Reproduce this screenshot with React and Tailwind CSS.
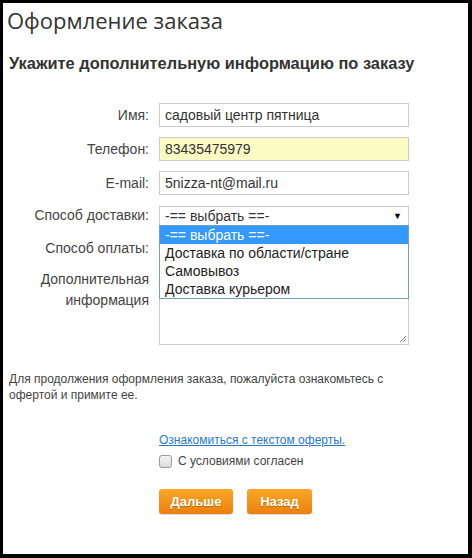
import React from "react";

function Row({ label, children, className = "" }) {
  return (
    <div className={"flex items-center " + className}>
      <div className="w-[146px] pr-[0px] text-right text-[14px] text-[#444]">{label}</div>
      <div className="ml-[10px] w-[250px]">{children}</div>
    </div>
  );
}

export default function App() {
  const font = { fontFamily: '"Liberation Sans", Arial, sans-serif' };
  return (
    <div
      className="w-[472px] h-[558px] bg-white border-t-[3px] border-l-[3px] border-r-4 border-b-4 border-black overflow-hidden"
      style={font}
    >
      <div className="flex flex-col">
        <h1
          className="pl-[4px] pt-[3px] text-[22px] leading-[28px] text-[#333]"
          style={{ fontFamily: '"Open Sans", sans-serif' }}
        >
          Оформление заказа
        </h1>
        <h2 className="mt-[19px] pl-[6px] text-[16.4px] leading-[20px] font-bold text-[#333]">
          Укажите дополнительную информацию по заказу
        </h2>

        <div className="mt-[30px] flex flex-col">
          <Row label="Имя:">
            <div className="h-[24px] border border-[#ccc] bg-white px-[5px] text-[14px] leading-[22px] text-[#333]">
              садовый центр пятница
            </div>
          </Row>
          <Row label="Телефон:" className="mt-[10px]">
            <div className="h-[24px] border border-[#ccc] bg-[#fbfbc4] px-[5px] text-[14px] leading-[22px] text-[#333]">
              83435475979
            </div>
          </Row>
          <Row label="E-mail:" className="mt-[10px]">
            <div className="h-[24px] border border-[#ccc] bg-white px-[5px] text-[14px] leading-[22px] text-[#333]">
              5nizza-nt@mail.ru
            </div>
          </Row>
          <Row label="Способ доставки:" className="mt-[10px] relative z-10">
            <div className="relative">
              <div className="flex h-[20px] items-center justify-between border border-[#ccc] bg-white pl-[5px] pr-[6px] text-[14px] leading-[18px] text-[#333]">
                <span>-== выбрать ==-</span>
                <span className="text-[9px] text-black">▼</span>
              </div>
              <div className="absolute left-0 top-[19px] w-[250px] border border-[#7a9cbb] bg-white text-[14px] leading-[18px] text-[#222]">
                <div className="bg-[#3399ff] pl-[5px] text-white">-== выбрать ==-</div>
                <div className="pl-[5px]">Доставка по области/стране</div>
                <div className="pl-[5px]">Самовывоз</div>
                <div className="pl-[5px]">Доставка курьером</div>
              </div>
            </div>
          </Row>
          <Row label="Способ оплаты:" className="mt-[12px]">
            <div className="h-[21px] border border-[#ccc] bg-white" />
          </Row>
          <div className="mt-[10px] flex items-start">
            <div className="w-[146px] pt-[0px] text-right text-[14px] leading-[21px] text-[#444]">
              Дополнительная
              <br />
              информация
            </div>
            <div className="relative ml-[10px] h-[76px] w-[250px] border border-[#ccc] bg-white">
              <svg className="absolute bottom-[1px] right-[1px]" width="8" height="8" viewBox="0 0 8 8">
                <path d="M7 1 L1 7 M7 4 L4 7" stroke="#888" strokeWidth="1" />
              </svg>
            </div>
          </div>
        </div>

        <p className="mt-[26px] pl-[6px] text-[12px] leading-[16px] text-[#444]">
          Для продолжения оформления заказа, пожалуйста ознакомьтесь с
          <br />
          офертой и примите ее.
        </p>

        <div className="ml-[156px] mt-[30px] flex flex-col">
          <a className="text-[12px] leading-[14px] text-[#2a7ac9] underline" href="#">
            Ознакомиться с текстом оферты.
          </a>
          <label className="mt-[5px] flex items-center text-[12px] text-[#444]">
            <span className="h-[13px] w-[13px] rounded-[3px] border border-[#999] bg-gradient-to-b from-[#f4f4f4] to-[#dcdcdc]" />
            <span className="ml-[6px]">С условиями согласен</span>
          </label>
          <div className="mt-[19px] flex gap-[14px]">
            <button className="h-[25px] w-[74px] rounded-[3px] bg-gradient-to-b from-[#f9a825] to-[#ec7f0b] text-[13px] font-bold text-white [text-shadow:0_1px_1px_rgba(0,0,0,0.25)] shadow-[0_1px_1px_rgba(0,0,0,0.15)]">
              Дальше
            </button>
            <button className="h-[25px] w-[65px] rounded-[3px] bg-gradient-to-b from-[#f9a825] to-[#ec7f0b] text-[13px] font-bold text-white [text-shadow:0_1px_1px_rgba(0,0,0,0.25)] shadow-[0_1px_1px_rgba(0,0,0,0.15)]">
              Назад
            </button>
          </div>
        </div>
      </div>
    </div>
  );
}
